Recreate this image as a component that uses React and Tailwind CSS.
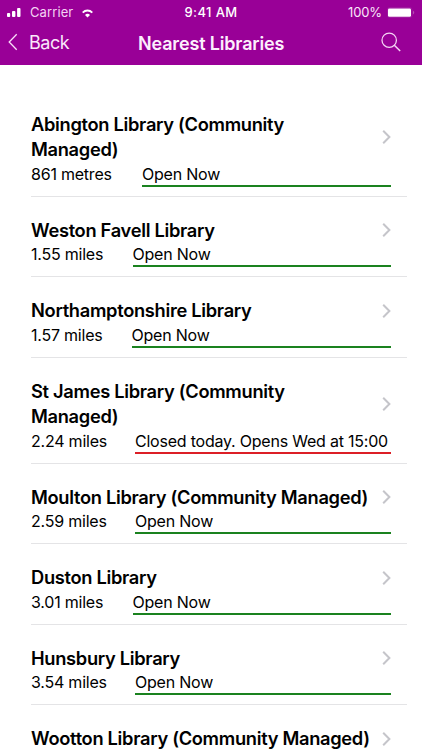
import React from 'react';

const libraries = [
  { name: 'Abington Library (Community Managed)', distance: '861 metres', status: 'Open Now', open: true, col: 'w-[111px]' },
  { name: 'Weston Favell Library', distance: '1.55 miles', status: 'Open Now', open: true, col: 'w-[101.5px]' },
  { name: 'Northamptonshire Library', distance: '1.57 miles', status: 'Open Now', open: true, col: 'w-[100.5px]' },
  { name: 'St James Library (Community Managed)', distance: '2.24 miles', status: 'Closed today. Opens Wed at 15:00', open: false, col: 'w-[104px]' },
  { name: 'Moulton Library (Community Managed)', distance: '2.59 miles', status: 'Open Now', open: true, col: 'w-[104px]' },
  { name: 'Duston Library', distance: '3.01 miles', status: 'Open Now', open: true, col: 'w-[101.5px]' },
  { name: 'Hunsbury Library', distance: '3.54 miles', status: 'Open Now', open: true, col: 'w-[104px]' },
  { name: 'Wootton Library (Community Managed)', distance: '3.61 miles', status: 'Open Now', open: true, col: 'w-[104px]' },
];

const StatusBar = () => (
  <div className="flex h-6 items-center text-[13px] leading-6">
    <div className="flex flex-1 items-center pl-[7px]">
      <svg width="15" height="9" viewBox="0 0 15 9" fill="currentColor">
        <rect x="0" y="5" width="3.2" height="4" rx="0.9" />
        <rect x="5" y="3" width="3.4" height="6" rx="0.9" />
        <rect x="10.1" y="0" width="3.4" height="9" rx="0.9" />
      </svg>
      <span className="ml-2 tracking-[0.1px] text-[#f3d3f3]">Carrier</span>
      <svg className="mt-0.5 ml-[9px]" width="11" height="9" viewBox="0 0 11 9" fill="none" stroke="currentColor">
        <path d="M0.7 3.6C3.4 0.8 7.6 0.8 10.3 3.6" strokeWidth="1.8" />
        <path d="M3 5.9C4.4 4.5 6.6 4.5 8 5.9L5.5 8.4Z" fill="currentColor" stroke="none" />
      </svg>
    </div>
    <span className="font-medium tracking-[0.4px]">9:41 AM</span>
    <div className="flex flex-1 items-center justify-end pr-[7px]">
      <span className="mr-[5px] tracking-[-0.1px] text-[#f9e6f9]">100%</span>
      <svg width="28" height="11" viewBox="0 0 28 11">
        <rect x="0.5" y="0.5" width="24.5" height="10" rx="2.2" fill="none" stroke="#a020a0" strokeWidth="0.8" />
        <rect x="1" y="1.5" width="23" height="8.3" rx="1.2" fill="white" />
        <path d="M26.3 3.8C27.5 4.4 27.5 6.8 26.3 7.4Z" fill="#c070c0" />
      </svg>
    </div>
  </div>
);

const NavBar = () => (
  <div className="flex h-[41px] items-center pb-[3px]">
    <div className="flex w-[138px] items-center pl-2">
      <svg className="-mt-0.5" width="10" height="18" viewBox="0 0 10 18" fill="none" stroke="#f9e0f9" strokeWidth="1.3">
        <path d="M8.7 1.2L1.2 9L8.7 16.8" />
      </svg>
      <span className="-mt-0.5 ml-[11px] text-[18px] tracking-[-0.5px] text-[#fae8fa]">Back</span>
    </div>
    <h1 className="text-[18px] font-semibold tracking-[-0.16px] text-[#fdeffd]">Nearest Libraries</h1>
    <div className="flex flex-1 justify-end pr-[21px]">
      <svg className="-mt-0.5" width="20" height="20" viewBox="0 0 20 20" fill="none" stroke="#f5d5f5" strokeWidth="1.25">
        <circle cx="8.2" cy="8.2" r="7.2" />
        <path d="M13.3 13.3L19.2 19" strokeWidth="1.5" />
      </svg>
    </div>
  </div>
);

const LibraryRow = ({ library }) => (
  <li className="border-b border-[#e4e4e6] pt-[21px] pr-4 pb-[9.1px]">
    <div className="flex items-center justify-between">
      <h2 className="w-[341px] text-[18.3px] leading-[25.4px] font-semibold tracking-[-0.31px]">{library.name}</h2>
      <svg className="-mt-px shrink-0" width="9" height="14" viewBox="0 0 9 14" fill="none" stroke="#c5c5ca" strokeWidth="2">
        <path d="M1.2 0.8L7.4 7L1.2 13.2" />
      </svg>
    </div>
    <div className="flex text-[16px] leading-[22px] tracking-[-0.22px] whitespace-nowrap">
      <span className={library.col}>{library.distance}</span>
      <span className={`flex-1 border-b-2 ${library.open ? 'border-[#1a821f]' : 'border-[#dc1f26]'}`}>
        {library.status}
      </span>
    </div>
  </li>
);

const App = () => (
  <div className="h-[750px] w-[422px] overflow-hidden bg-white font-['Inter',sans-serif] text-black">
    <header className="h-[65px] bg-[#990097] text-white">
      <StatusBar />
      <NavBar />
    </header>
    <ul className="mt-[26px] mr-[15px] ml-[31px]">
      {libraries.map((library) => (
        <LibraryRow key={library.name} library={library} />
      ))}
    </ul>
  </div>
);

export default App;
